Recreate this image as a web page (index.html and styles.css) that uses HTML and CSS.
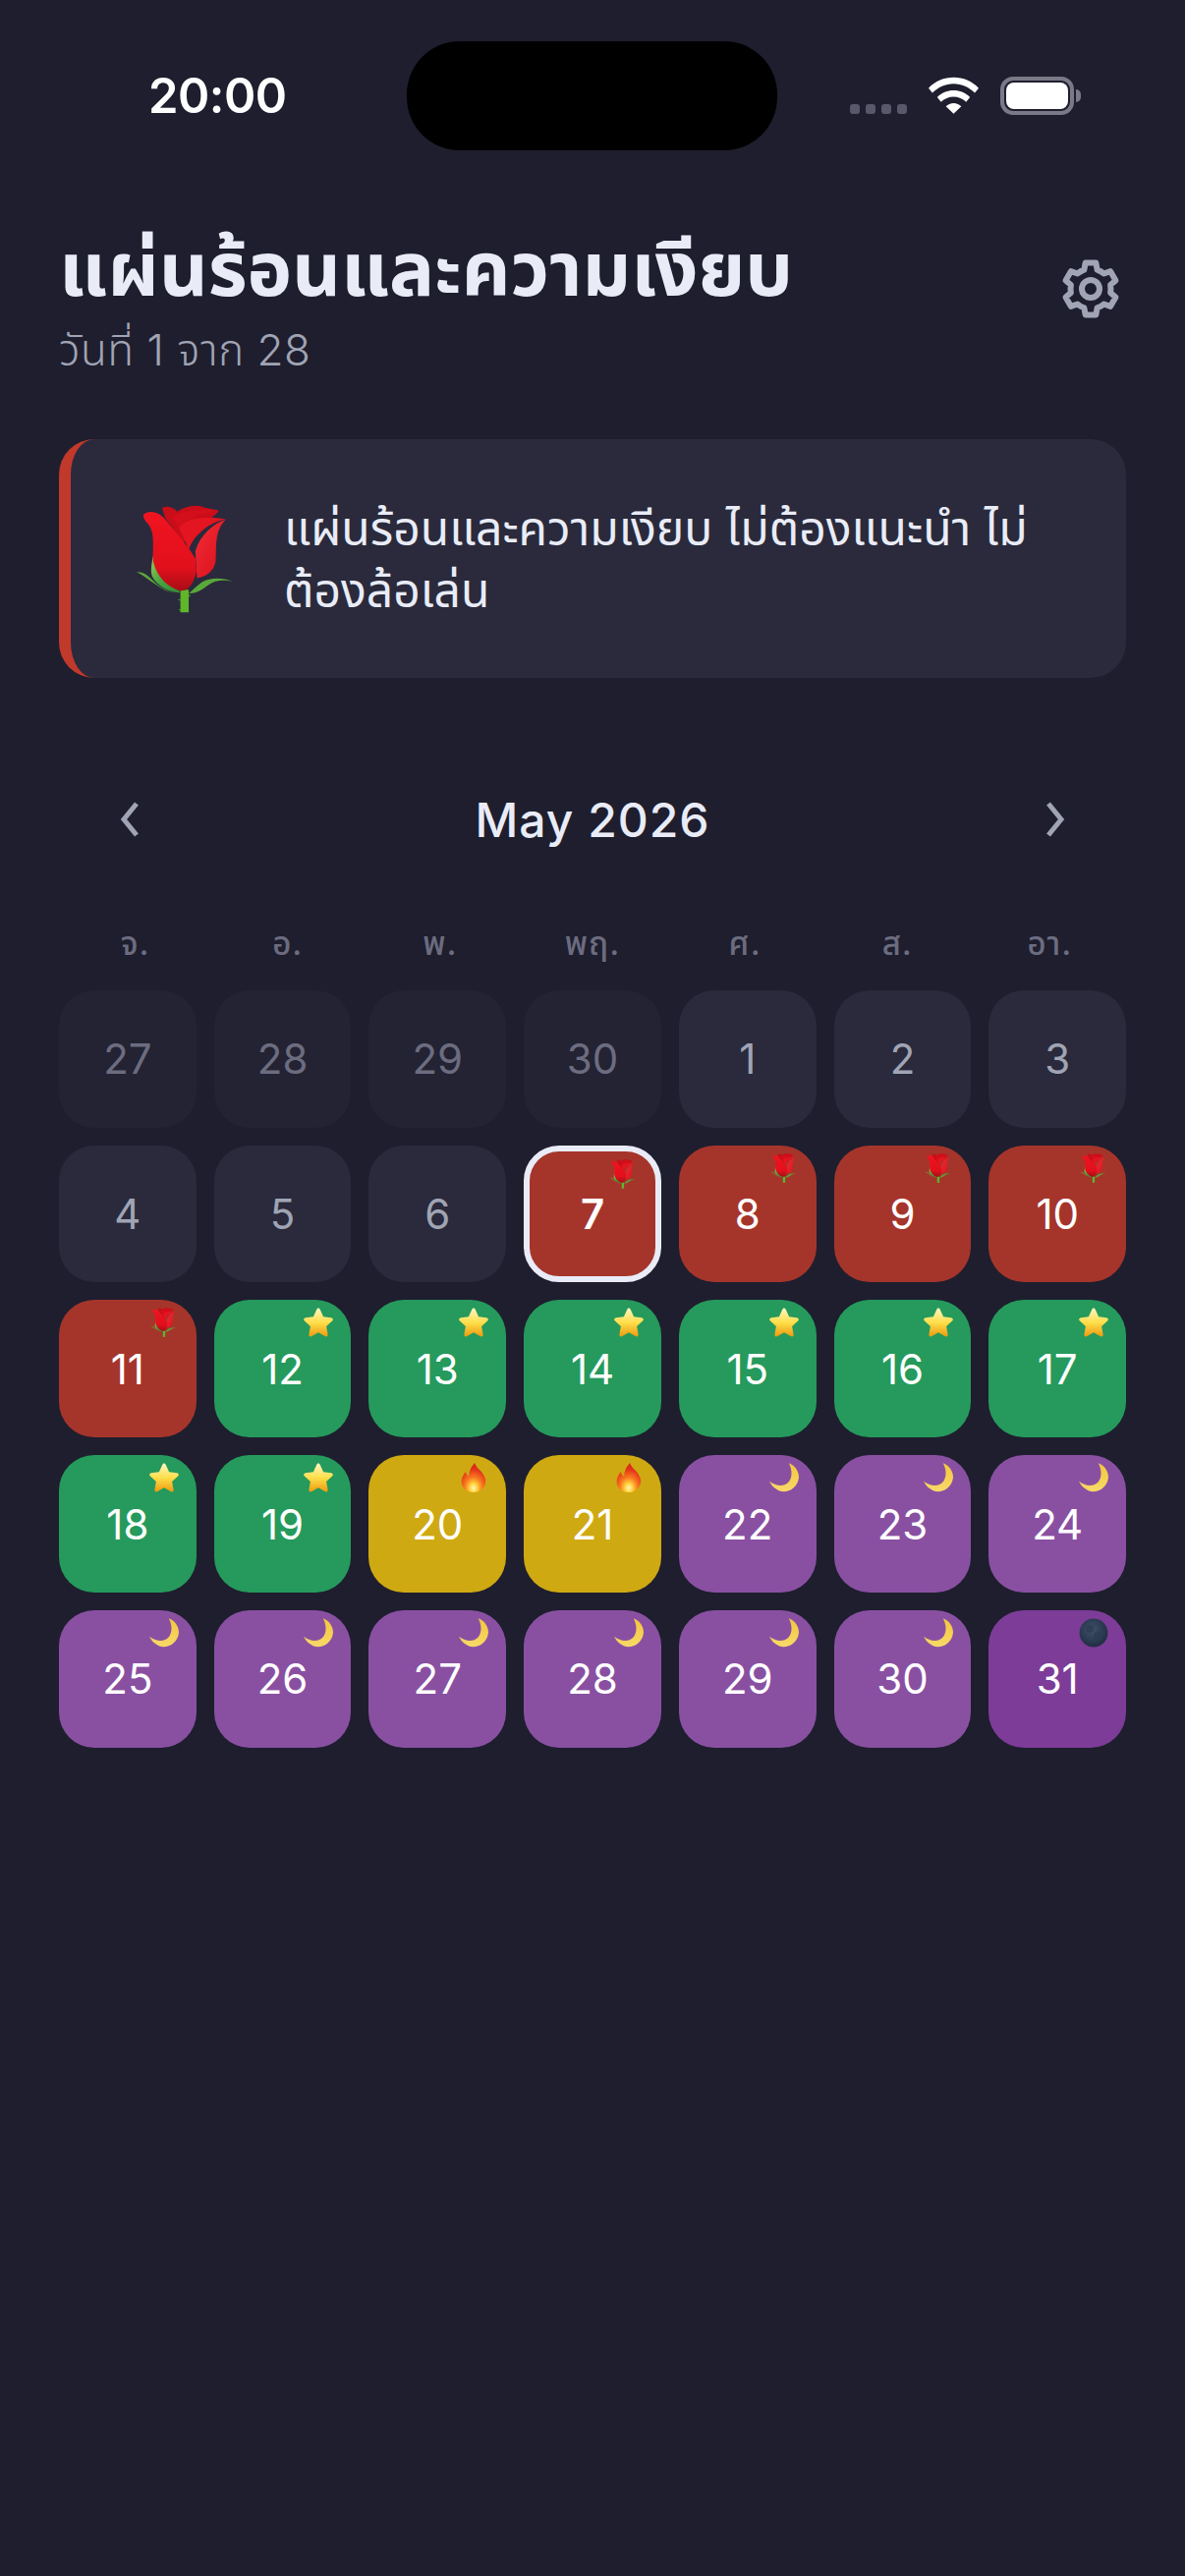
FILE: index.html
```html
<!DOCTYPE html>
<html lang="th">
<head>
<meta charset="utf-8">
<title>แผ่นร้อนและความเงียบ</title>
<link rel="stylesheet" href="styles.css">
</head>
<body>
<svg class="defs" width="0" height="0" aria-hidden="true">
  <defs>
    <linearGradient id="gStar" x1="0" y1="0" x2="0" y2="1"><stop offset="0" stop-color="#fff6c4"/><stop offset=".5" stop-color="#ffdf4a"/><stop offset="1" stop-color="#ee9a10"/></linearGradient>
    <linearGradient id="gMoon" x1="0" y1="0" x2="0" y2="1"><stop offset="0" stop-color="#f3c63f"/><stop offset="1" stop-color="#f8d968"/></linearGradient>
    <linearGradient id="gBud" x1="0" y1="0" x2="0" y2="1"><stop offset="0" stop-color="#f01420"/><stop offset=".7" stop-color="#e2101c"/><stop offset="1" stop-color="#a90d16"/></linearGradient>
    <linearGradient id="gPetal" x1="0" y1="0" x2="1" y2="1"><stop offset="0" stop-color="#f32c36"/><stop offset="1" stop-color="#d80f1b"/></linearGradient>
    <linearGradient id="gSepal" x1="0" y1="0" x2="1" y2="1"><stop offset="0" stop-color="#a4cf5c"/><stop offset=".5" stop-color="#49a53f"/><stop offset="1" stop-color="#2f8a38"/></linearGradient>
    <radialGradient id="gFire" cx=".5" cy=".85" r=".8"><stop offset="0" stop-color="#fff6c0"/><stop offset=".2" stop-color="#ffd23c"/><stop offset=".45" stop-color="#f97a1f"/><stop offset=".8" stop-color="#e2321a"/><stop offset="1" stop-color="#d62a18"/></radialGradient>
    <radialGradient id="gDark" cx=".45" cy=".4" r=".65"><stop offset="0" stop-color="#3f536b"/><stop offset="1" stop-color="#1e2b3f"/></radialGradient>
    <symbol id="rose" viewBox="298 250 290 325">
      <path d="M430 505h25v68h-25z" fill="#5fb62a"/>
      <path d="M430 532l-8 3 8 3zM455 520l7 3-7 3zM430 563l-6 3 6 3z" fill="#4a9a22"/>
      <path d="M298 452C320 450 335 465 350 480C370 500 390 510 412 515C375 512 335 470 298 452z" fill="#5da83a"/>
      <path d="M588 480C555 468 520 468 495 482C480 492 470 505 455 516C480 516 495 505 515 490C535 476 560 474 588 480z" fill="#5aa83a"/>
      <path d="M350 392C345 420 338 445 345 465C360 495 400 515 432 514C405 490 365 450 350 392z" fill="url(#gSepal)"/>
      <path d="M567 293C530 305 490 340 475 388L480 470C510 465 530 450 536 420C540 380 530 330 567 293z" fill="url(#gPetal)"/>
      <path d="M375 258C395 250 410 258 420 270C450 250 485 248 505 258C515 262 530 262 545 266C540 280 520 290 505 295C470 310 450 340 440 365C420 335 395 305 385 290C380 278 378 268 375 258z" fill="#c90d19"/>
      <path d="M318 280C335 262 370 270 390 300C420 335 450 370 475 410L478 450C470 490 450 510 430 508C395 500 360 470 348 420C345 380 355 340 335 310C325 300 318 290 318 280z" fill="url(#gBud)"/>
      <path d="M425 318C445 290 500 280 567 293C520 300 470 340 455 385C445 360 435 340 425 318z" fill="#e21520"/>
      <path d="M405 285C430 268 490 262 545 266C510 272 460 282 425 318C418 305 412 295 405 285z" fill="#d40f1b"/>
    </symbol>
    <symbol id="star" viewBox="0 0 100 100">
      <path d="M50 2c3 0 5 2 6 5l11 24 26 3c6 1 9 7 4 11L77 63l5 28c1 6-5 9-10 6L50 84 28 97c-5 3-11 0-10-6l5-28L3 45c-5-4-2-10 4-11l26-3L44 7c1-3 3-5 6-5z" fill="url(#gStar)"/>
    </symbol>
    <symbol id="moon" viewBox="362 115 91 91">
      <path d="M422 116C445 125 453 145 453 160C450 190 425 205 405 204C390 203 372 192 362 172C380 186 405 190 420 176C435 160 432 135 422 116z" fill="url(#gMoon)"/>
    </symbol>
    <symbol id="dark" viewBox="0 0 100 100">
      <circle cx="50" cy="50" r="48" fill="url(#gDark)"/>
      <circle cx="38" cy="36" r="13" fill="#2a3a4f" opacity=".7"/>
      <circle cx="66" cy="60" r="16" fill="#2c3c52" opacity=".7"/>
    </symbol>
    <symbol id="fire" viewBox="0 0 100 100">
      <path d="M54 0c4 20 30 28 36 56 4 24-16 44-40 44C26 100 6 82 9 58c2-12 9-20 14-28 2 8 5 13 11 16C34 28 42 12 54 0z" fill="url(#gFire)"/>
    </symbol>
  </defs>
</svg>

<main class="screen">
  <header class="status">
    <span class="time">20:00</span>
    <div class="island"></div>
    <div class="status-icons">
      <div class="signal"><i></i><i></i><i></i><i></i></div>
      <svg class="wifi" viewBox="0 0 52 38" aria-hidden="true"><path d="M0 11.500C7 4.500 16 .5 26 .5s19 4 26 11l-4 5C42 10.500 34.500 7 26 7S10 10.500 4 16.500z" fill="#fff"/><path d="M9 21c4.500-4.500 10.500-7 17-7s12.500 2.500 17 7l-4 5c-3.500-3.500-8-5.500-13-5.500s-9.500 2-13 5.500z" fill="#fff"/><path d="M18 30.500c2-2 5-3.300 8-3.300s6 1.300 8 3.300L26 38z" fill="#fff"/></svg>
      <div class="battery"><div class="battery-shell"><div class="battery-fill"></div></div><div class="battery-cap"></div></div>
    </div>
  </header>

  <section class="title-row">
    <div>
      <h1>แผ่นร้อนและความเงียบ</h1>
      <p class="sub">วันที่ 1 จาก 28</p>
    </div>
    <svg class="gear" viewBox="0 0 60 60" aria-hidden="true" fill="none" stroke="#a0a4b4" stroke-width="6" stroke-linejoin="round"><path d="M23.330 10.620L24.660 3.520H35.340L36.670 10.620A20.500 20.500 0 0 1 43.450 14.530L50.130 12.130L55.470 21.380L50.120 26.090A20.500 20.500 0 0 1 50.120 33.910L55.470 38.620L50.130 47.870L43.450 45.470A20.500 20.500 0 0 1 36.670 49.380L35.340 56.480H24.660L23.330 49.380A20.500 20.500 0 0 1 16.550 45.470L9.870 47.870L4.530 38.620L9.880 33.910A20.500 20.500 0 0 1 9.880 26.090L4.530 21.380L9.870 12.130L16.550 14.530A20.500 20.500 0 0 1 23.330 10.620Z"/><circle cx="30" cy="30" r="9"/></svg>
  </section>

  <section class="quote">
    <svg class="quote-emoji" aria-hidden="true"><use href="#rose"/></svg>
    <p>แผ่นร้อนและความเงียบ ไม่ต้องแนะนำ ไม่ต้องล้อเล่น</p>
  </section>

  <nav class="month">
    <svg class="chev" viewBox="0 0 24 36" aria-hidden="true"><path d="M19 2 6 18l13 16" fill="none" stroke="#a0a4b4" stroke-width="5"/></svg>
    <h2>May 2026</h2>
    <svg class="chev" viewBox="0 0 24 36" aria-hidden="true"><path d="M5 2l13 16L5 34" fill="none" stroke="#a0a4b4" stroke-width="5"/></svg>
  </nav>

  <div class="weekdays"><span>จ.</span><span>อ.</span><span>พ.</span><span>พฤ.</span><span>ศ.</span><span>ส.</span><span>อา.</span></div>

  <div class="grid">
    <div class="cell out">27</div><div class="cell out">28</div><div class="cell out">29</div><div class="cell out">30</div>
    <div class="cell plain">1</div><div class="cell plain">2</div><div class="cell plain">3</div>
    <div class="cell plain">4</div><div class="cell plain">5</div><div class="cell plain">6</div>
    <div class="cell red today">7<svg class="mark"><use href="#rose"/></svg></div>
    <div class="cell red">8<svg class="mark"><use href="#rose"/></svg></div>
    <div class="cell red">9<svg class="mark"><use href="#rose"/></svg></div>
    <div class="cell red">10<svg class="mark"><use href="#rose"/></svg></div>
    <div class="cell red">11<svg class="mark"><use href="#rose"/></svg></div>
    <div class="cell green">12<svg class="mark"><use href="#star"/></svg></div>
    <div class="cell green">13<svg class="mark"><use href="#star"/></svg></div>
    <div class="cell green">14<svg class="mark"><use href="#star"/></svg></div>
    <div class="cell green">15<svg class="mark"><use href="#star"/></svg></div>
    <div class="cell green">16<svg class="mark"><use href="#star"/></svg></div>
    <div class="cell green">17<svg class="mark"><use href="#star"/></svg></div>
    <div class="cell green">18<svg class="mark"><use href="#star"/></svg></div>
    <div class="cell green">19<svg class="mark"><use href="#star"/></svg></div>
    <div class="cell yellow">20<svg class="mark"><use href="#fire"/></svg></div>
    <div class="cell yellow">21<svg class="mark"><use href="#fire"/></svg></div>
    <div class="cell purple">22<svg class="mark"><use href="#moon"/></svg></div>
    <div class="cell purple">23<svg class="mark"><use href="#moon"/></svg></div>
    <div class="cell purple">24<svg class="mark"><use href="#moon"/></svg></div>
    <div class="cell purple">25<svg class="mark"><use href="#moon"/></svg></div>
    <div class="cell purple">26<svg class="mark"><use href="#moon"/></svg></div>
    <div class="cell purple">27<svg class="mark"><use href="#moon"/></svg></div>
    <div class="cell purple">28<svg class="mark"><use href="#moon"/></svg></div>
    <div class="cell purple">29<svg class="mark"><use href="#moon"/></svg></div>
    <div class="cell purple">30<svg class="mark"><use href="#moon"/></svg></div>
    <div class="cell deep">31<svg class="mark"><use href="#dark"/></svg></div>
  </div>
</main>
</body>
</html>
```

FILE: styles.css
```css
* { box-sizing: border-box; }
html, body { margin: 0; padding: 0; }
body {
  width: 1206px;
  height: 2622px;
  overflow: hidden;
  background: #1e1e2e;
  font-family: Inter, "Noto Sans Thai", "Noto Sans", "Liberation Sans", sans-serif;
}
.defs { position: absolute; }
.screen { padding: 0 60px; }

.status {
  height: 153px;
  margin: 0 -60px;
  position: relative;
  display: flex;
  align-items: flex-start;
  justify-content: space-between;
  padding: 0 106px 0 151px;
}
.time { color: #fff; font-size: 49px; font-weight: 600; letter-spacing: -.5px; line-height: 56px; margin-top: 70px; }
.island {
  position: absolute;
  left: 414px;
  top: 42px;
  width: 377px;
  height: 111px;
  background: #000;
  border-radius: 54px;
}
.status-icons { display: flex; align-items: flex-start; gap: 22px; margin-top: 78px; }
.signal { display: flex; gap: 6px; margin-top: 28px; }
.signal i { width: 10px; height: 10px; border-radius: 3px; background: #58586a; }
.wifi { width: 51px; height: 38px; }
.battery { display: flex; align-items: center; height: 39px; }
.battery-shell { width: 75px; height: 39px; border: 4px solid #797987; border-radius: 13px; padding: 2px; }
.battery-fill { width: 100%; height: 100%; background: #fff; border-radius: 8px; }
.battery-cap { width: 5px; height: 13px; background: #797987; border-radius: 0 5px 5px 0; margin-left: 2px; }

.title-row { display: flex; justify-content: space-between; align-items: flex-start; margin-top: 80px; padding-right: 6px; }
h1 { margin: 0; color: #e9ecf7; font-size: 77px; font-weight: 700; line-height: 80px; }
.sub { margin: 17px 0 0; color: #a0a4b4; font-size: 44px; font-weight: 300; letter-spacing: .5px; line-height: 52px; }
.gear { width: 60px; height: 60px; margin-top: 31px; overflow: visible; }

.quote {
  margin-top: 65px;
  height: 243px;
  background: #2a2a3c;
  border-left: 12px solid #c0392b;
  border-radius: 36px;
  display: flex;
  align-items: center;
  padding: 0 60px 0 67px;
  gap: 52px;
}
.quote-emoji { width: 98px; height: 110px; flex: none; }
.quote p { margin: 0; color: #e9ecf7; font-size: 48px; line-height: 63px; }

.month { display: flex; align-items: center; justify-content: space-between; margin-top: 114px; padding: 0 60px; height: 60px; }
.month h2 { margin: 0; color: #e9ecf7; font-size: 48px; font-weight: 500; letter-spacing: 1px; }
.chev { width: 24px; height: 36px; }

.weekdays { display: grid; grid-template-columns: repeat(7, 1fr); margin-top: 78px; height: 36px; text-align: center; color: #6c6c80; font-size: 33px; font-weight: 500; line-height: 36px; letter-spacing: 1px; }

.grid { display: grid; grid-template-columns: repeat(7, 1fr); gap: 18px; margin-top: 30px; }
.cell {
  position: relative;
  aspect-ratio: 1;
  display: flex;
  align-items: center;
  justify-content: center;
  border-radius: 36px;
  color: #fff;
  font-size: 42px;
  font-weight: 400;
}
.out { background: #232333; color: #6c6c80; }
.plain { background: #2a2a3c; color: #a0a4b4; }
.red { background: #a5352b; }
.green { background: #259a5c; }
.yellow { background: #cfa912; }
.purple { background: #8950a2; }
.deep { background: #7d3c98; }
.today { border: 6px solid #e9ecf7; font-weight: 600; }
.mark { position: absolute; right: 18px; top: 8px; width: 30px; height: 30px; }
```
